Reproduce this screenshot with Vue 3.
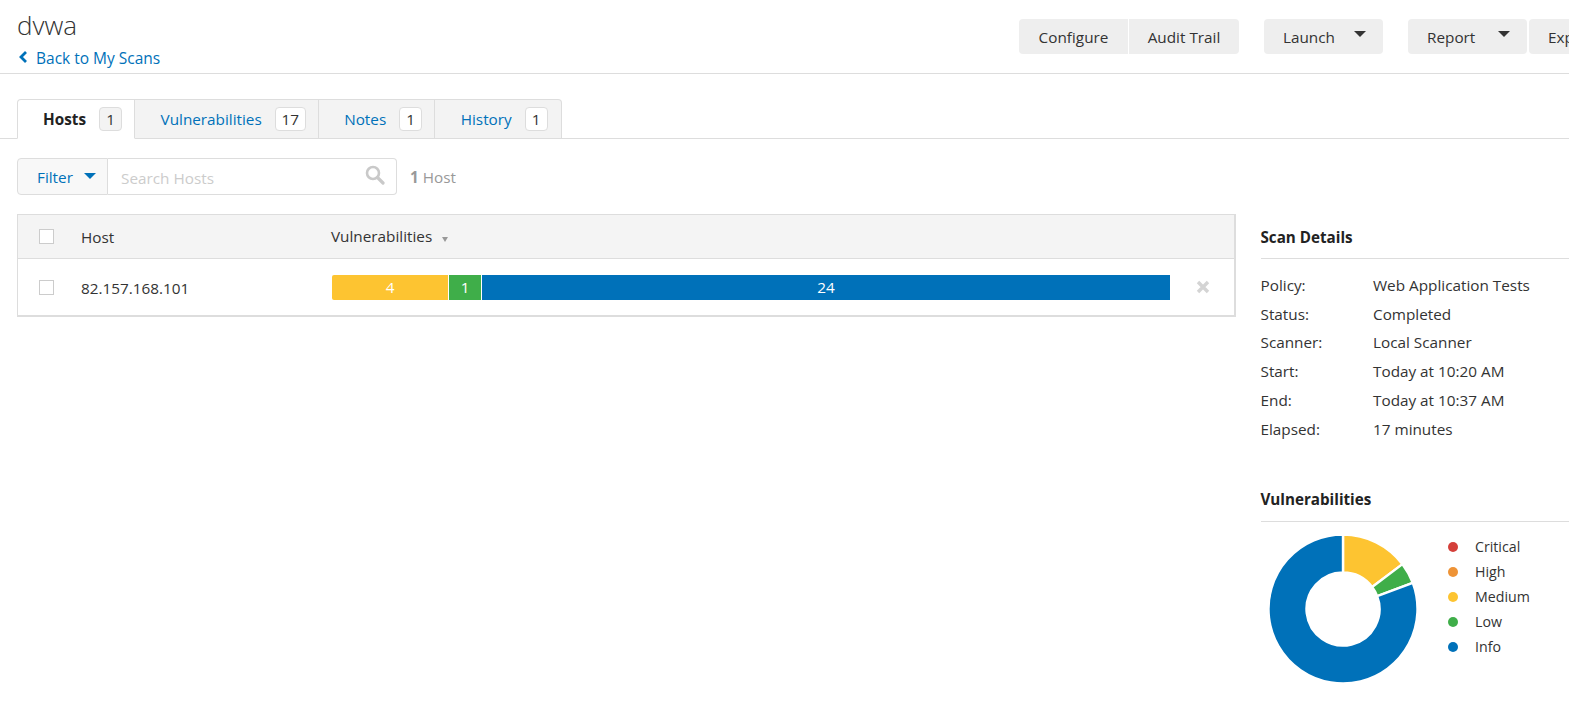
<script setup>
const tabs = [
  { label: 'Hosts', count: 1, active: true },
  { label: 'Vulnerabilities', count: 17 },
  { label: 'Notes', count: 1 },
  { label: 'History', count: 1 }
]
const segments = [
  { value: 4, width: 116, color: '#fdc431' },
  { value: 1, width: 32, color: '#3fae49' },
  { value: 24, width: 688, color: '#0071b9' }
]
const details = [
  ['Policy:', 'Web Application Tests'],
  ['Status:', 'Completed'],
  ['Scanner:', 'Local Scanner'],
  ['Start:', 'Today at 10:20 AM'],
  ['End:', 'Today at 10:37 AM'],
  ['Elapsed:', '17 minutes']
]
const legend = [
  { label: 'Critical', color: '#d43f3a' },
  { label: 'High', color: '#ee9336' },
  { label: 'Medium', color: '#fdc431' },
  { label: 'Low', color: '#3fae49' },
  { label: 'Info', color: '#0071b9' }
]
const cx = 75, cy = 75, R = 74.5, r = 36.5
const pt = (rad, deg) => {
  const a = (deg * Math.PI) / 180
  return `${(cx + rad * Math.sin(a)).toFixed(2)} ${(cy - rad * Math.cos(a)).toFixed(2)}`
}
const slice = (from, to) => {
  const large = to - from > 180 ? 1 : 0
  return `M${pt(R, from)} A${R} ${R} 0 ${large} 1 ${pt(R, to)} L${pt(r, to)} A${r} ${r} 0 ${large} 0 ${pt(r, from)} Z`
}
const slices = [
  { d: slice(0, 53), color: '#fdc431' },
  { d: slice(53, 69.5), color: '#3fae49' },
  { d: slice(69.5, 360), color: '#0071b9' }
]
</script>

<template>
  <div class="page">
    <header class="top">
      <div class="title-block">
        <h1>dvwa</h1>
        <a class="back">
          <svg width="10" height="12" viewBox="0 0 10 12"><path d="M8 1 L3 6 L8 11" fill="none" stroke="#0071b9" stroke-width="2.8" /></svg>
          Back to My Scans
        </a>
      </div>
      <div class="actions">
        <div class="group">
          <button class="btn left">Configure</button>
          <button class="btn right">Audit Trail</button>
        </div>
        <button class="btn menu">Launch<i class="caret"></i></button>
        <div class="group tight">
          <button class="btn menu">Report<i class="caret"></i></button>
          <button class="btn menu">Export<i class="caret"></i></button>
        </div>
      </div>
    </header>

    <nav class="tabs">
      <div v-for="t in tabs" :key="t.label" class="tab" :class="{ active: t.active }">
        <span class="tab-label">{{ t.label }}</span>
        <span class="badge">{{ t.count }}</span>
      </div>
    </nav>

    <div class="filter-row">
      <div class="filter">Filter<i class="caret blue"></i></div>
      <div class="search">
        <span class="placeholder">Search Hosts</span>
        <svg width="20" height="20" viewBox="0 0 20 20"><circle cx="8" cy="8" r="6" fill="none" stroke="#c9c9c9" stroke-width="2.6" /><path d="M12.5 12.5 L18 18" stroke="#c9c9c9" stroke-width="3.2" stroke-linecap="round" /></svg>
      </div>
      <div class="count"><b>1</b> Host</div>
    </div>

    <div class="content">
      <section class="table">
        <div class="row head">
          <span class="check"></span>
          <span class="col-host">Host</span>
          <span class="col-vuln">Vulnerabilities<i class="sort"></i></span>
        </div>
        <div class="row body-row">
          <span class="check"></span>
          <span class="col-host">82.157.168.101</span>
          <div class="bar">
            <span v-for="s in segments" :key="s.color" class="seg" :style="{ width: s.width + 'px', background: s.color }">{{ s.value }}</span>
          </div>
          <svg class="remove" width="16" height="16" viewBox="0 0 16 16"><path d="M3 3 L13 13 M13 3 L3 13" stroke="#d4d4d4" stroke-width="3.4" /></svg>
        </div>
      </section>

      <aside class="side">
        <h2>Scan Details</h2>
        <dl class="details">
          <div v-for="d in details" :key="d[0]" class="detail">
            <dt>{{ d[0] }}</dt>
            <dd>{{ d[1] }}</dd>
          </div>
        </dl>
        <h2 class="second">Vulnerabilities</h2>
        <div class="chart">
          <svg width="150" height="150" viewBox="0 0 150 150">
            <path v-for="s in slices" :key="s.color" :d="s.d" :fill="s.color" stroke="#fff" stroke-width="2.4" />
          </svg>
          <ul class="legend">
            <li v-for="l in legend" :key="l.label">
              <i class="dot" :style="{ background: l.color }"></i>{{ l.label }}
            </li>
          </ul>
        </div>
      </aside>
    </div>
  </div>
</template>

<style>
html, body { margin: 0; background: #fff; overflow: hidden; }
</style>

<style scoped>
.page {
  width: 1569px;
  height: 712px;
  overflow: hidden;
  font-family: "Open Sans", "Noto Sans", sans-serif;
  font-size: 15.3px;
  color: #333;
  background: #fff;
}
.top {
  display: flex;
  height: 73px;
  border-bottom: 1px solid #ddd;
  box-sizing: content-box;
}
.title-block {
  flex: 0 0 1002px;
  padding-left: 17px;
}
h1 {
  margin: 8px 0 0;
  font-size: 26px;
  font-weight: 300;
  line-height: 35px;
  color: #333;
}
.back {
  display: flex;
  align-items: center;
  gap: 8px;
  margin-top: 5px;
  height: 20px;
  font-size: 15.5px;
  color: #0071b9;
}
.back svg { margin-left: 1px; margin-top: -3px; }
.actions {
  display: flex;
  flex: none;
  gap: 25px;
  margin-top: 19px;
  height: 35px;
}
.group { display: flex; gap: 1px; }
.group.tight { gap: 2px; }
.btn {
  height: 35px;
  padding: 1px 0 0;
  box-sizing: border-box;
  border: 0;
  border-radius: 4px;
  background: #eee;
  font: inherit;
  color: #333;
  display: flex;
  align-items: center;
  flex: none;
}
.left { width: 109px; border-radius: 4px 0 0 4px; justify-content: center; }
.right { width: 110px; border-radius: 0 4px 4px 0; justify-content: center; }
.menu { width: 119px; padding-left: 19px; position: relative; }
.caret {
  position: absolute;
  right: 17px;
  top: 12px;
  border-left: 6px solid transparent;
  border-right: 6px solid transparent;
  border-top: 6px solid #333;
}
.caret.blue { border-top-color: #0071b9; right: 11px; top: 14px; }
.tabs {
  display: flex;
  margin-top: 25px;
  padding-left: 17px;
  border-bottom: 1px solid #ddd;
  box-sizing: content-box;
  height: 39px;
}
.tab {
  display: flex;
  align-items: center;
  height: 40px;
  box-sizing: border-box;
  padding: 0 12px 0 25.5px;
  gap: 13px;
  background: #f3f3f3;
  border: 1px solid #ddd;
  border-left: 0;
  color: #0071b9;
}
.tab:first-child { border-left: 1px solid #ddd; border-radius: 4px 0 0 0; padding-left: 25px; }
.tab:last-child { border-radius: 0 4px 0 0; padding-right: 13px; }
.tab.active {
  background: #fff;
  border-bottom-color: #fff;
  color: #222;
  font-weight: 700;
}
.badge {
  min-width: 23px;
  height: 24px;
  padding: 0 5.7px;
  box-sizing: border-box;
  display: flex;
  align-items: center;
  justify-content: center;
  border: 1px solid #ddd;
  border-radius: 4px;
  background: #fff;
  color: #333;
  font-weight: 400;
}
.active .badge { background: #f3f3f3; }
.filter-row {
  display: flex;
  align-items: center;
  margin: 19px 0 0 17px;
  height: 37px;
}
.filter {
  position: relative;
  width: 91px;
  height: 37px;
  box-sizing: border-box;
  padding-left: 19px;
  display: flex;
  align-items: center;
  color: #0071b9;
  background: #f8f8f8;
  border: 1px solid #ddd;
  border-radius: 4px 0 0 4px;
}
.search {
  width: 289px;
  height: 37px;
  box-sizing: border-box;
  display: flex;
  align-items: center;
  justify-content: space-between;
  padding: 0 11px 0 13px;
  border: 1px solid #ddd;
  border-left: 0;
  border-radius: 0 4px 4px 0;
}
.search svg { margin-top: -3px; }
.placeholder { color: #ccc; padding-top: 2px; }
.count { margin-left: 13px; color: #999; }
.count b { font-weight: 700; }
.content {
  display: flex;
  align-items: flex-start;
  margin: 19px 0 0 17px;
}
.table {
  flex: none;
  width: 1219px;
  box-sizing: border-box;
  border: 1px solid #ddd;
  border-width: 1px 2px 2px 1px;
}
.row {
  display: flex;
  align-items: center;
  position: relative;
}
.head {
  height: 44px;
  background: #f4f4f4;
  border-bottom: 1px solid #ddd;
  box-sizing: border-box;
}
.body-row { height: 56px; }
.check {
  flex: none;
  width: 15px;
  height: 15px;
  box-sizing: border-box;
  margin-left: 21px;
  border: 1px solid #ccc;
  background: #fff;
}
.col-host { flex: 0 0 250px; margin-left: 27px; padding-top: 2px; }
.head .col-host { padding-top: 0; }
.col-vuln { margin-top: -1px; }
.sort {
  display: inline-block;
  margin-left: 10px;
  vertical-align: 0;
  border-left: 3px solid transparent;
  border-right: 3px solid transparent;
  border-top: 5px solid #999;
}
.bar { display: flex; gap: 1px; margin-left: 1px; height: 25px; }
.seg {
  color: #fff;
  line-height: 25px;
  text-align: center;
  flex: none;
}
.seg:first-child { border-radius: 2px 0 0 2px; }
.remove { margin-left: 25px; }
.side { flex: none; width: 340px; margin-left: 24.5px; }
h2 {
  margin: 0;
  height: 45px;
  box-sizing: border-box;
  padding-top: 13px;
  line-height: 20px;
  font-size: 15.2px;
  font-weight: 700;
  color: #222;
  border-bottom: 1px solid #ddd;
}
.second { margin-top: 34.55px; height: 44px; padding-top: 11px; }
.details { margin: 11.85px 0 0; }
.detail { display: flex; height: 28.8px; line-height: 28.8px; }
dt { flex: 0 0 112.5px; }
dd { margin: 0; }
.chart { display: flex; align-items: flex-start; padding-top: 12px; margin-left: 7px; }
.chart svg { flex: none; }
.legend {
  list-style: none;
  margin: 0 0 0 30.5px;
  padding: 0;
  font-size: 14.2px;
}
.legend li {
  display: flex;
  align-items: center;
  height: 25px;
}
.dot {
  width: 10px;
  height: 10px;
  border-radius: 50%;
  margin-right: 17px;
}
</style>
